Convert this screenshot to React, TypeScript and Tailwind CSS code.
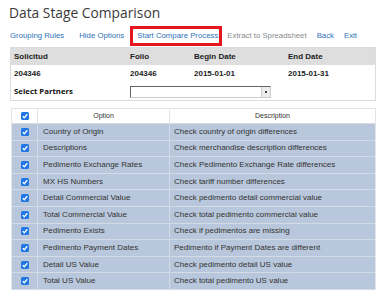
import React from "react";

const rows: [string, string][] = [
  ["Country of Origin", "Check country of origin differences"],
  ["Descriptions", "Check merchandise description differences"],
  ["Pedimento Exchange Rates", "Check Pedimento Exchange Rate differences"],
  ["MX HS Numbers", "Check tariff number differences"],
  ["Detail Commercial Value", "Check pedimento detail commercial value"],
  ["Total Commercial Value", "Check total pedimento commercial value"],
  ["Pedimento Exists", "Check if pedimentos are missing"],
  ["Pedimento Payment Dates", "Pedimento if Payment Dates are different"],
  ["Detail US Value", "Check pedimento detail US value"],
  ["Total US Value", "Check total pedimento US value"],
];

function Check() {
  return (
    <span className="flex h-[8px] w-[8px] items-center justify-center rounded-[1.5px] bg-[#1f76e4]">
      <svg width="8" height="8" viewBox="0 0 8 8">
        <polyline points="1.8,4.2 3.3,5.7 6.3,2.3" fill="none" stroke="white" strokeWidth="1.3" />
      </svg>
    </span>
  );
}

export default function App() {
  return (
    <div className="h-[293px] w-[382px] overflow-hidden bg-white font-['Liberation_Sans',Arial,sans-serif] text-[8px] text-[#333]">
      <h1 className="pl-[9px] pt-[4px] font-['Open_Sans',sans-serif] text-[13.8px] leading-[18px] text-[#3a3a3a]">
        Data Stage Comparison
      </h1>
      <nav className="mt-[4px] flex h-[20px] items-center pl-[10px] text-[7.8px] leading-none text-[#2e72b8]">
        <span>Grouping Rules</span>
        <span className="ml-[15px]">Hide Options</span>
        <span className="ml-[6px] flex h-[20px] items-center border-[3px] border-[#e8141c] pl-[4px] pr-[1px]">
          Start Compare Process
        </span>
        <span className="ml-[5px] text-[#8a8a8a]">Extract to Spreadsheet</span>
        <span className="ml-[10px]">Back</span>
        <span className="ml-[10px]">Exit</span>
      </nav>

      <div className="mt-[1px] ml-[10px] w-[366px] border border-[#dcdcdc] font-bold text-[#222]">
        <div className="grid h-[17px] grid-cols-[116px_64px_94px_1fr] items-center bg-[#dedede]">
          <span className="pl-[3px]">Solicitud</span>
          <span className="pl-[3px]">Folio</span>
          <span className="pl-[3px]">Begin Date</span>
          <span className="pl-[3px]">End Date</span>
        </div>
        <div className="grid h-[18px] grid-cols-[116px_64px_94px_1fr] items-center">
          <span className="pl-[3px]">204346</span>
          <span className="pl-[3px]">204346</span>
          <span className="pl-[3px]">2015-01-01</span>
          <span className="pl-[3px]">2015-01-31</span>
        </div>
        <div className="grid h-[17px] grid-cols-[116px_1fr] items-center">
          <span className="pl-[3px] font-['Open_Sans',sans-serif] font-bold text-[7.8px] text-[#111]">Select Partners</span>
          <div className="ml-[3px] flex h-[12px] w-[141px] border border-t-[#666] border-l-[#666] border-r-[#ccc] border-b-[#ccc] bg-white">
            <div className="flex-1" />
            <div className="flex w-[9px] items-center justify-center border-l border-[#ccc] bg-[#ececec]">
              <span className="h-[2px] w-[2px] bg-[#444]" />
            </div>
          </div>
        </div>
      </div>

      <div className="mt-[7px] ml-[11px] w-[365px] border-l border-r border-t border-[#e4e4e4]">
        <div className="grid h-[15px] grid-cols-[25px_132px_1fr] items-center border-b border-[#dcdcdc] bg-white text-[7px]">
          <span className="flex justify-center">
            <Check />
          </span>
          <span className="flex h-full items-center justify-center border-l border-[#e4e4e4]">Option</span>
          <span className="flex h-full items-center justify-center border-l border-[#e4e4e4]">Description</span>
        </div>
        {rows.map(([o, d]) => (
          <div
            key={o}
            className="grid h-[16.6px] grid-cols-[25px_132px_1fr] items-center border-b border-[#d2dbe6] bg-[#b8c7db]"
          >
            <span className="flex justify-center">
              <Check />
            </span>
            <span className="flex h-full items-center border-l border-[#d2dbe6] pl-[5px]">{o}</span>
            <span className="flex h-full items-center border-l border-[#d2dbe6] pl-[4px]">{d}</span>
          </div>
        ))}
      </div>
    </div>
  );
}
